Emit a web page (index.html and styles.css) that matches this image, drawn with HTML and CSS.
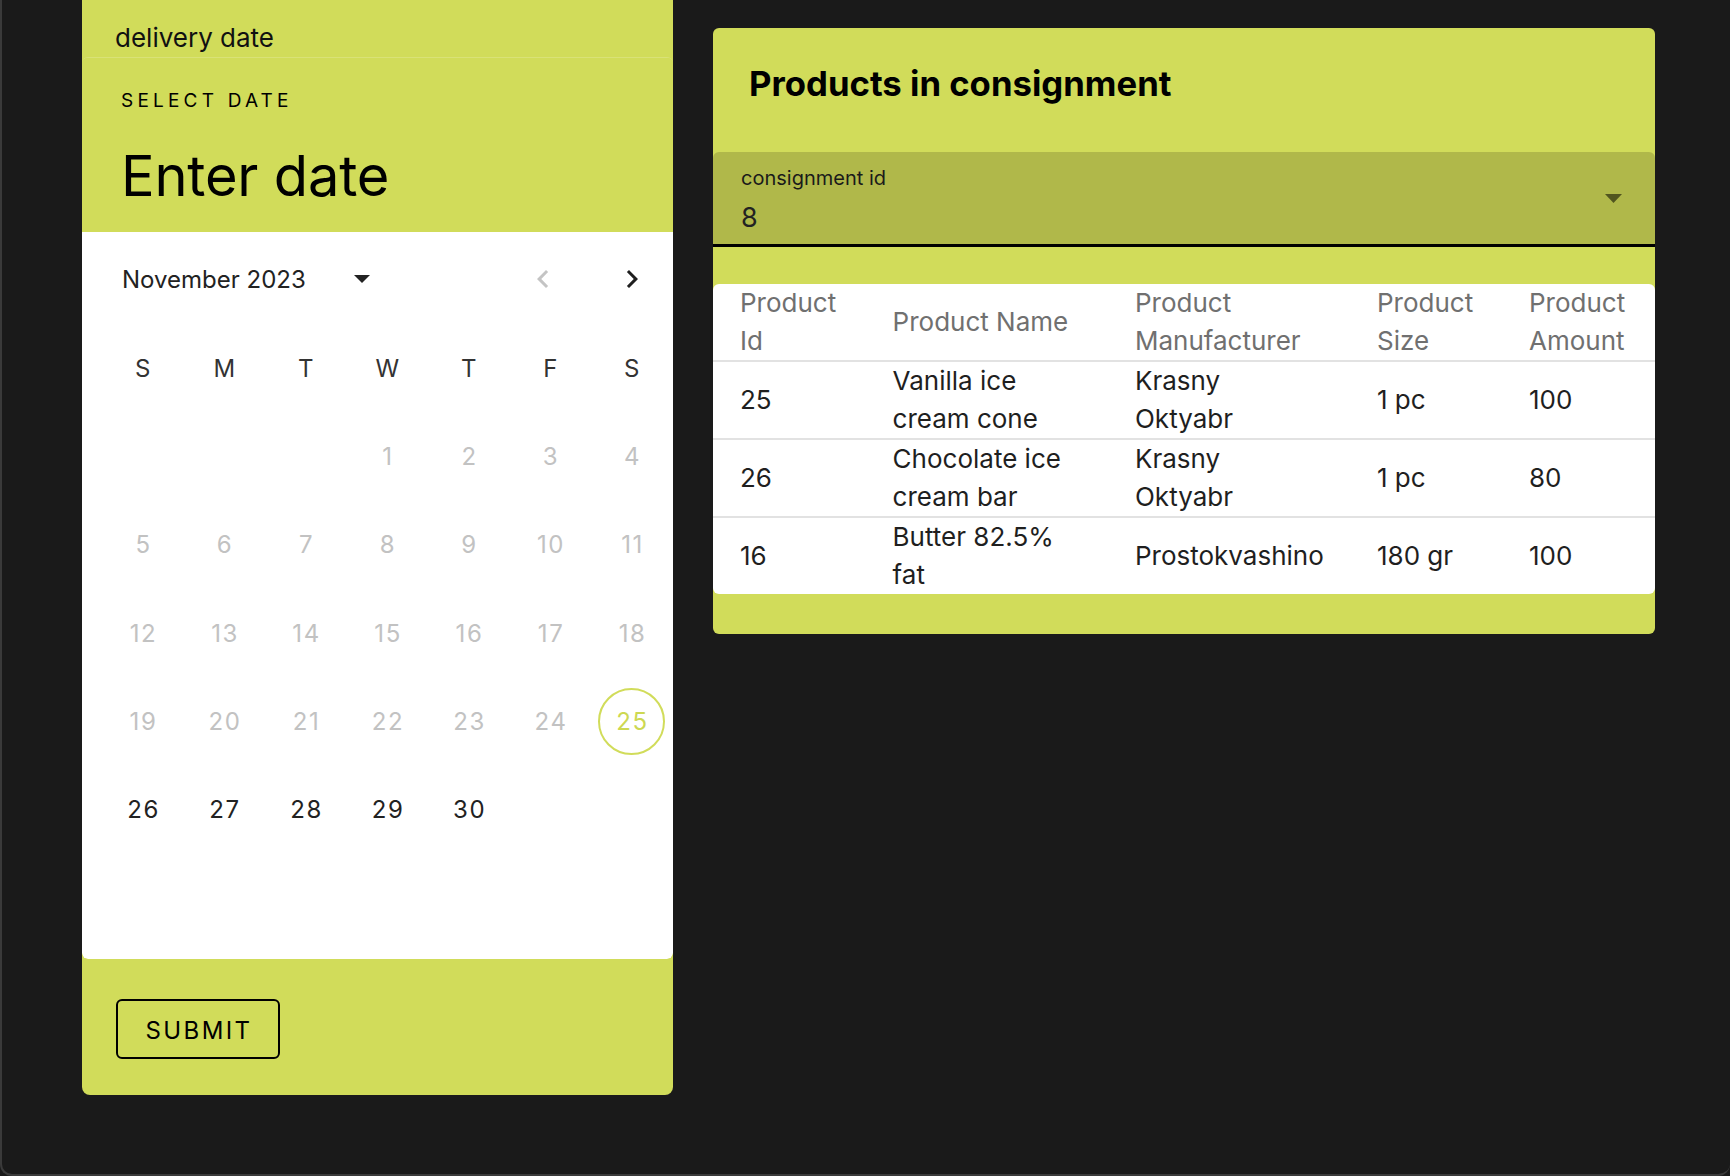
FILE: index.html
```html
<!DOCTYPE html>
<html lang="en">
<head>
<meta charset="utf-8">
<title>Consignment</title>
<link rel="stylesheet" href="styles.css">
</head>
<body>
<div class="screen">
  <section class="panel-left">
    <div class="field-label">delivery date</div>
    <div class="picker">
      <div class="toolbar">
        <div class="overline">Select date</div>
        <div class="headline">Enter date</div>
      </div>
      <div class="calendar">
        <div class="cal-head">
          <span class="month">November 2023</span>
          <svg class="month-arrow" width="16" height="8" viewBox="0 0 16 8"><path d="M0 0h16L8 8z"/></svg>
          <span class="spacer"></span>
          <button class="nav prev" aria-label="Previous month"><svg width="36" height="36" viewBox="0 0 24 24"><path d="M15.41 7.41 14 6l-6 6 6 6 1.41-1.41L10.83 12z"/></svg></button>
          <button class="nav next" aria-label="Next month"><svg width="36" height="36" viewBox="0 0 24 24"><path d="M10 6 8.59 7.41 13.17 12l-4.58 4.59L10 18l6-6z"/></svg></button>
        </div>
        <div class="grid">
          <span class="wd">S</span><span class="wd">M</span><span class="wd">T</span><span class="wd">W</span><span class="wd">T</span><span class="wd">F</span><span class="wd">S</span>
          <span></span><span></span><span></span>
          <span class="day off">1</span><span class="day off">2</span><span class="day off">3</span><span class="day off">4</span>
          <span class="day off">5</span><span class="day off">6</span><span class="day off">7</span><span class="day off">8</span><span class="day off">9</span><span class="day off">10</span><span class="day off">11</span>
          <span class="day off">12</span><span class="day off">13</span><span class="day off">14</span><span class="day off">15</span><span class="day off">16</span><span class="day off">17</span><span class="day off">18</span>
          <span class="day off">19</span><span class="day off">20</span><span class="day off">21</span><span class="day off">22</span><span class="day off">23</span><span class="day off">24</span><span class="day today"><span class="ring">25</span></span>
          <span class="day">26</span><span class="day">27</span><span class="day">28</span><span class="day">29</span><span class="day">30</span>
        </div>
      </div>
    </div>
    <div class="actions"><button class="submit">SUBMIT</button></div>
  </section>

  <section class="panel-right">
    <h2 class="title">Products in consignment</h2>
    <div class="select">
      <div class="select-label">consignment id</div>
      <div class="select-value">8</div>
      <svg class="select-arrow" width="17" height="9" viewBox="0 0 17 9"><path d="M0 0h17L8.5 9z"/></svg>
    </div>
    <div class="table-wrap">
      <table class="products">
        <colgroup><col class="c1"><col class="c2"><col class="c3"><col class="c4"><col class="c5"></colgroup>
        <thead>
          <tr><th>Product Id</th><th>Product Name</th><th>Product Manufacturer</th><th>Product Size</th><th>Product Amount</th></tr>
        </thead>
        <tbody>
          <tr><td>25</td><td>Vanilla ice cream cone</td><td>Krasny Oktyabr</td><td>1 pc</td><td>100</td></tr>
          <tr><td>26</td><td>Chocolate ice cream bar</td><td>Krasny Oktyabr</td><td>1 pc</td><td>80</td></tr>
          <tr><td>16</td><td>Butter 82.5% fat</td><td><span class="nowrap">Prostokvashino</span></td><td>180 gr</td><td>100</td></tr>
        </tbody>
      </table>
    </div>
  </section>
</div>
</body>
</html>
```
FILE: styles.css
```css
* { box-sizing: border-box; }

html, body {
  margin: 0;
  padding: 0;
  background: #1a1a1a;
}

body {
  font-family: Inter, "Noto Sans", "Liberation Sans", sans-serif;
  color: #1f1f1f;
}

.screen {
  width: 1730px;
  height: 1176px;
  overflow: hidden;
  background: #1a1a1a;
  border-left: 2px solid #3a3a3a;
  border-bottom: 2px solid #3a3a3a;
  border-radius: 0 0 12px 12px;
  display: flex;
  align-items: flex-start;
  gap: 40px;
  padding-left: 80px;
}

/* ---------- left panel ---------- */
.panel-left {
  width: 591px;
  background: #d1dc5a;
  border-radius: 0 0 8px 8px;
  display: flex;
  flex-direction: column;
}

.field-label {
  height: 57px;
  padding: 23px 0 0 33px;
  font-size: 26px;
  line-height: 30px;
  color: #111;
}

.picker {
  border-radius: 6px;
  border-top: 1px solid rgba(255, 255, 255, 0.18);
  overflow: hidden;
}

.toolbar {
  height: 174px;
  padding: 31px 0 0 39px;
  background: #d1dc5a;
  color: #000;
}

.overline {
  font-size: 19px;
  line-height: 24px;
  letter-spacing: 4.2px;
  text-transform: uppercase;
}

.headline {
  margin-top: 31px;
  font-size: 56px;
  line-height: 64px;
  letter-spacing: -0.2px;
}

.calendar {
  height: 727px;
  background: #fff;
  border-radius: 0 0 6px 6px;
  padding: 16px 0 0 20px;
}

.cal-head {
  height: 62px;
  display: flex;
  align-items: center;
}

.month {
  width: 212px;
  margin-left: 20px;
  font-size: 24px;
  color: #222;
}

.month-arrow {
  margin-left: 20px;
  fill: #222;
}

.spacer { flex: 1; }

.nav {
  width: 36px;
  height: 36px;
  padding: 0;
  border: 0;
  background: transparent;
  display: flex;
}

.nav.prev { fill: #c4c4c4; }
.nav.next { fill: #1f1f1f; margin-left: 53px; margin-right: 23px; }

.grid {
  margin-top: 14.2px;
  display: grid;
  grid-template-columns: repeat(7, 81.5px);
  grid-auto-rows: 88.25px;
  align-items: center;
  justify-items: center;
}

.wd {
  font-size: 24px;
  color: #333;
}

.day {
  font-size: 24px;
  letter-spacing: 1.6px;
  padding-left: 1.6px;
  color: #222;
}

.day.off { color: #c2c2c2; }

.day.today { padding-left: 0; }

.ring {
  width: 67px;
  height: 67px;
  border: 2px solid #d1dc5a;
  border-radius: 50%;
  display: flex;
  align-items: center;
  justify-content: center;
  padding-left: 1.6px;
  color: #cdd852;
}

.actions {
  height: 136px;
  padding: 40px 0 0 34px;
}

.submit {
  width: 164px;
  height: 60px;
  border: 2px solid #000;
  border-radius: 6px;
  background: transparent;
  font-family: inherit;
  font-size: 24px;
  letter-spacing: 2.4px;
  color: #000;
  padding: 2px 0 0 2px;
}

/* ---------- right panel ---------- */
.panel-right {
  width: 942px;
  margin-top: 28px;
  background: #d1dc5a;
  border-radius: 6px;
  padding-bottom: 40px;
}

.title {
  margin: 0;
  height: 124px;
  padding: 33px 0 0 36px;
  font-size: 34.7px;
  line-height: 45px;
  font-weight: 700;
  color: #000;
}

.select {
  position: relative;
  height: 95px;
  background: #b0b84a;
  border-radius: 6px 6px 0 0;
  border-bottom: 3px solid #000;
  padding: 14px 0 0 28px;
}

.select-label {
  font-size: 20px;
  line-height: 24px;
  color: #1a1a1a;
}

.select-value {
  margin-top: 12px;
  font-size: 27px;
  line-height: 32px;
  color: #222;
}

.select-arrow {
  position: absolute;
  right: 33px;
  top: 42px;
  fill: #51551f;
}

.table-wrap {
  margin-top: 37px;
  background: #fff;
  border-radius: 6px;
  overflow: hidden;
}

.products {
  width: 100%;
  border-collapse: separate;
  border-spacing: 0;
  table-layout: fixed;
  font-size: 26px;
  line-height: 38px;
}

.c1 { width: 152.6px; }
.c2 { width: 242.4px; }
.c3 { width: 242px; }
.c4 { width: 152px; }
.c5 { width: 153px; }

.products th,
.products td {
  padding: 0 18px 0 27px;
  text-align: left;
  vertical-align: middle;
  border-bottom: 2px solid #e2e2e2;
}

.products th {
  font-weight: 400;
  color: #707070;
}

.products td { color: #1f1f1f; }

.products th:nth-child(2),
.products td:nth-child(2) { padding-right: 28px; }

.products th:nth-child(3),
.products td:nth-child(3) { padding-right: 40px; }

.products tbody tr:last-child td { border-bottom: 0; }

.nowrap { white-space: nowrap; }
```
